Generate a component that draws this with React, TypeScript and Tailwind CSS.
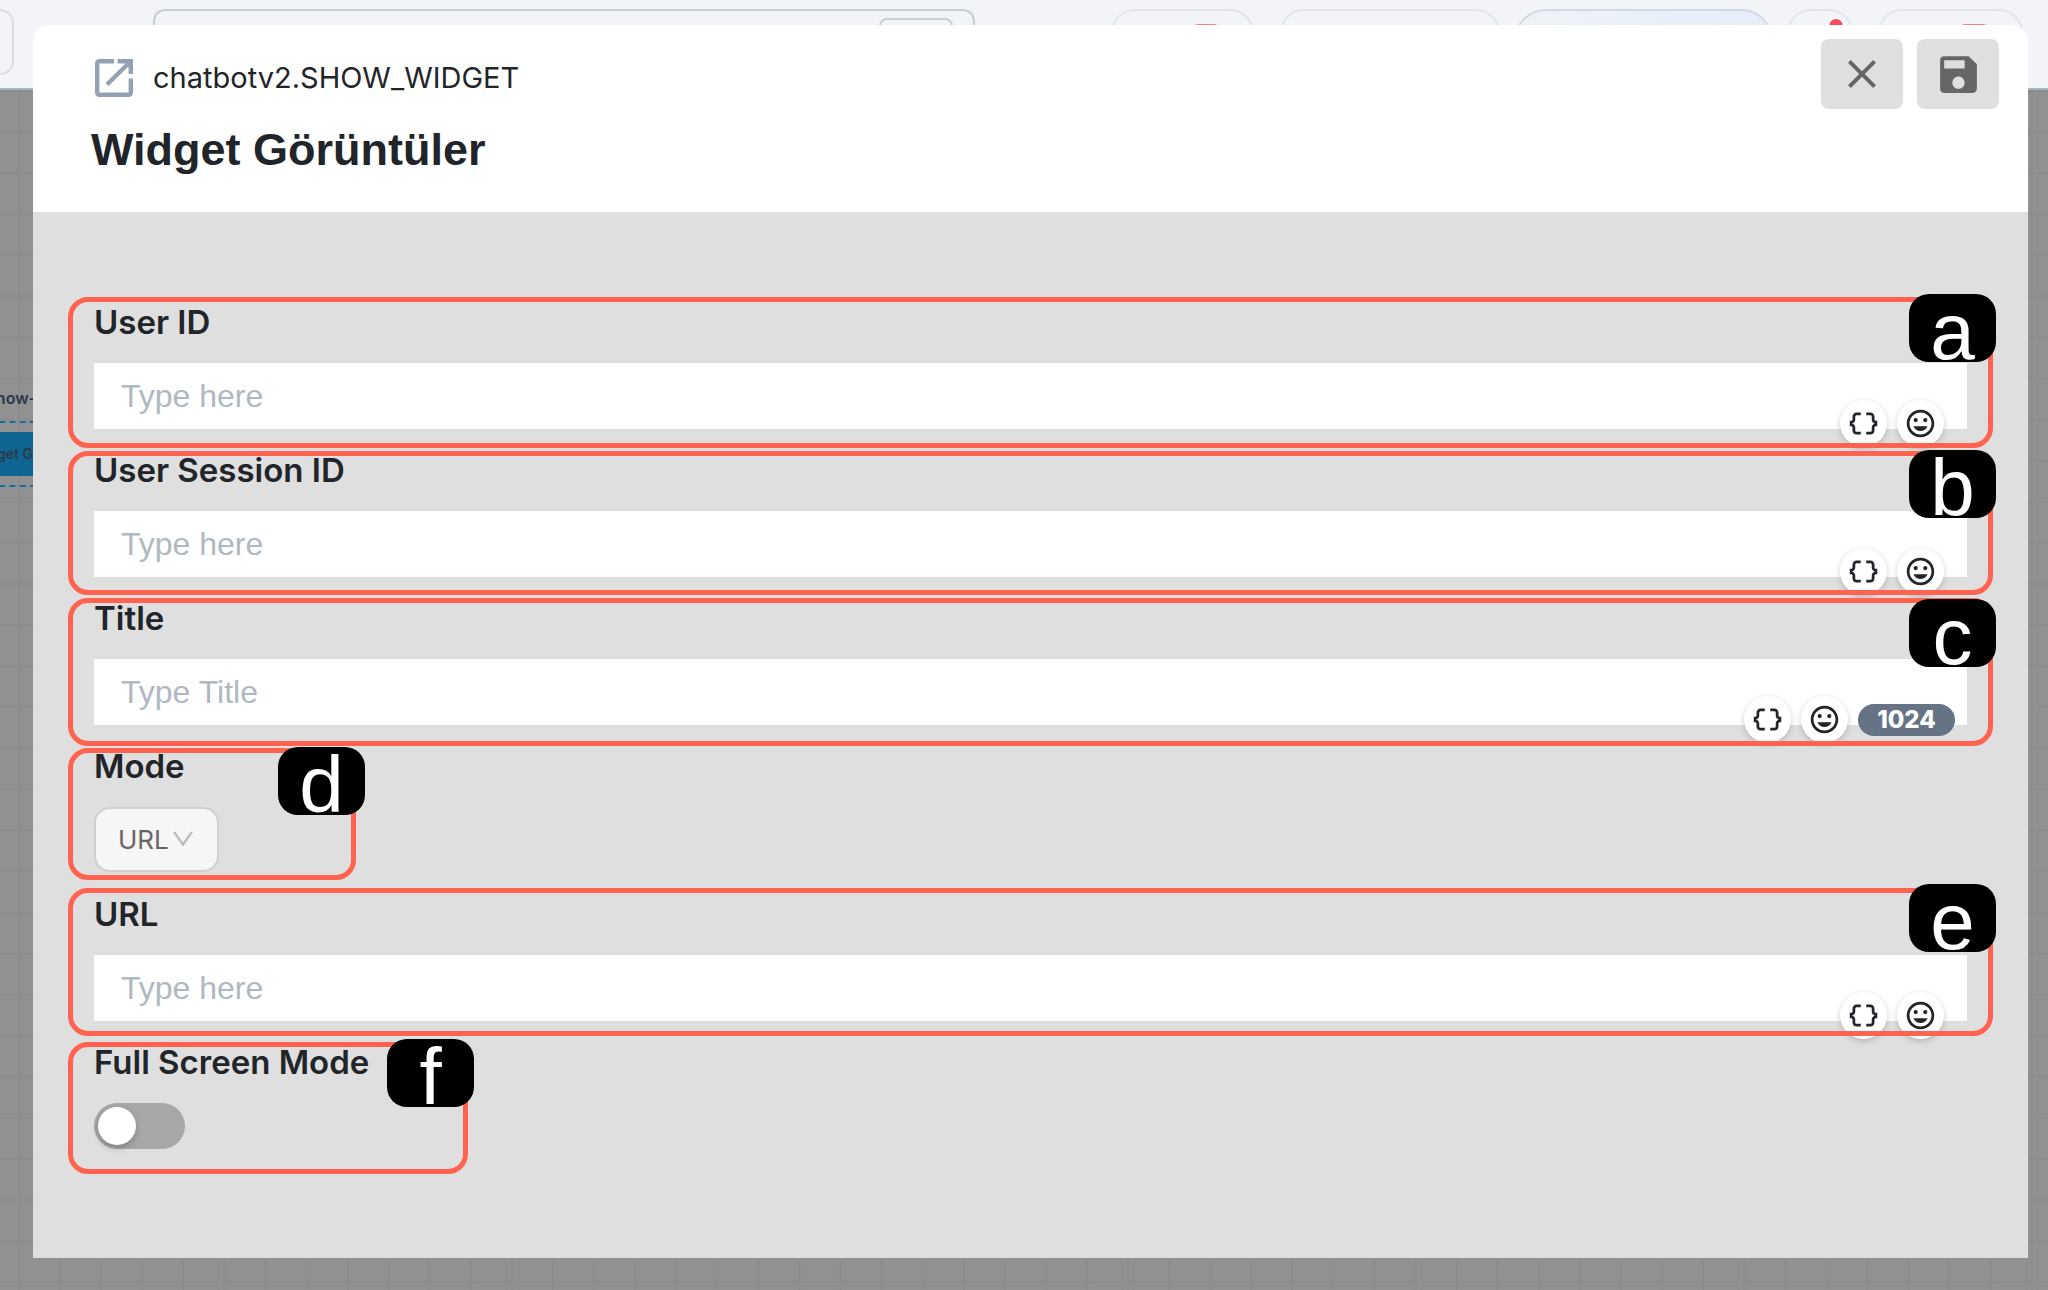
import { useState } from 'react';
import clsx from 'clsx';
import { MdClose, MdDataObject, MdInsertEmoticon, MdSave } from 'react-icons/md';

type FieldKind = 'text' | 'select' | 'switch';

interface Field {
  id: string;
  label: string;
  kind: FieldKind;
  placeholder?: string;
  limit?: number;
  marker: string;
  frameClass: string;
  badgeClass: string;
}

const fields: Field[] = [
  {
    id: 'user-id',
    label: 'User ID',
    kind: 'text',
    placeholder: 'Type here',
    marker: 'a',
    frameClass: '-inset-x-[26px] -top-[3px] h-[151px]',
    badgeClass: '-top-2 -right-2',
  },
  {
    id: 'user-session-id',
    label: 'User Session ID',
    kind: 'text',
    placeholder: 'Type here',
    marker: 'b',
    frameClass: '-inset-x-[26px] top-[3px] h-[144px]',
    badgeClass: '-top-[6px] -right-2',
  },
  {
    id: 'title',
    label: 'Title',
    kind: 'text',
    placeholder: 'Type Title',
    limit: 1024,
    marker: 'c',
    frameClass: '-inset-x-[26px] top-[2px] h-[148px]',
    badgeClass: '-top-1 -right-2',
  },
  {
    id: 'mode',
    label: 'Mode',
    kind: 'select',
    marker: 'd',
    frameClass: '-left-[26px] top-1 h-[132px] w-[288px]',
    badgeClass: '-top-[6px] -right-[14px]',
  },
  {
    id: 'url',
    label: 'URL',
    kind: 'text',
    placeholder: 'Type here',
    marker: 'e',
    frameClass: '-inset-x-[26px] -top-1 h-[148px]',
    badgeClass: '-top-[9px] -right-2',
  },
  {
    id: 'full-screen',
    label: 'Full Screen Mode',
    kind: 'switch',
    marker: 'f',
    frameClass: '-left-[26px] top-[2px] h-[132px] w-[400px]',
    badgeClass: '-top-2 -right-[11px]',
  },
];

function OpenIcon() {
  return (
    <svg width="38" height="38" viewBox="0 0 38 38" fill="none" stroke="#94a1b3" strokeWidth="4.4" aria-hidden="true">
      <path d="M19 2.2H4.2a2 2 0 0 0-2 2v29.6a2 2 0 0 0 2 2h29.6a2 2 0 0 0 2-2V19.5" />
      <path d="M22.5 2.2h13.3V15M12 25.5 34 4" />
      <path d="M27.5 2H36v8.5z" fill="#94a1b3" stroke="none" />
    </svg>
  );
}

function RoundButton({ label, children }: { label: string; children: React.ReactNode }) {
  return (
    <button
      type="button"
      aria-label={label}
      className="flex size-[47px] items-center justify-center rounded-full bg-white text-[#212529] shadow-[0_2px_6px_rgba(0,0,0,0.2)]"
    >
      {children}
    </button>
  );
}

function TextField({ field }: { field: Field }) {
  const [value, setValue] = useState('');

  return (
    <div className="relative">
      <input
        id={field.id}
        type="text"
        value={value}
        placeholder={field.placeholder}
        onChange={(e) => setValue(e.target.value)}
        className="block h-[66px] w-full bg-white px-[27px] font-['Liberation_Sans',Arial,sans-serif] text-[32px] text-[#212529] outline-none placeholder:text-[#b0b8c1]"
      />
      <div
        className={clsx(
          'absolute top-[37px] flex items-center gap-[10px]',
          field.limit ? 'right-3' : 'right-[23px]',
        )}
      >
        <RoundButton label="Insert variable">
          <MdDataObject size={33} />
        </RoundButton>
        <RoundButton label="Insert emoji">
          <MdInsertEmoticon size={33} />
        </RoundButton>
        {field.limit && (
          <span className="flex h-8 w-[97px] items-center justify-center rounded-full bg-[#667385] text-2xl font-extrabold text-white">
            {field.limit}
          </span>
        )}
      </div>
    </div>
  );
}

function SelectField({ id }: { id: string }) {
  return (
    <div className="relative w-[125px]">
      <select
        id={id}
        className="block h-[65px] w-full appearance-none rounded-2xl border-2 border-[#d0d0d0] bg-[#f6f6f6] pl-[22px] text-[26px] text-[#6b6464]"
      >
        <option>URL</option>
      </select>
      <svg
        className="pointer-events-none absolute top-[24px] right-[26px]"
        width="20"
        height="16"
        viewBox="0 0 20 16"
        fill="none"
        stroke="#bcbcbc"
        strokeWidth="2.2"
        aria-hidden="true"
      >
        <path d="M1 1l9 12.5L19 1" />
      </svg>
    </div>
  );
}

function SwitchField({ id }: { id: string }) {
  return (
    <div className="relative h-[46px] w-[91px]">
      <input
        id={id}
        type="checkbox"
        role="switch"
        className="peer block h-full w-full appearance-none rounded-full bg-[#a7a7a7] checked:bg-[#0d6efd]"
      />
      <span className="pointer-events-none absolute top-1 left-1 size-[38px] rounded-full bg-white shadow-[0_3px_6px_rgba(0,35,11,0.25)] peer-checked:left-[49px]" />
    </div>
  );
}

function FieldRow({ field }: { field: Field }) {
  return (
    <div className="relative h-[148px]">
      <label
        htmlFor={field.id}
        className="mb-[19px] block w-fit text-[33px] leading-[44px] font-semibold text-[#212529]"
      >
        {field.label}
      </label>
      {field.kind === 'text' && <TextField field={field} />}
      {field.kind === 'select' && <SelectField id={field.id} />}
      {field.kind === 'switch' && <SwitchField id={field.id} />}

      {/* callout frame with its letter */}
      <div
        className={clsx(
          'pointer-events-none absolute z-10 rounded-[20px] border-[5px] border-[#ff6350]',
          field.frameClass,
        )}
      >
        <span
          className={clsx(
            "absolute flex h-[68px] w-[87px] items-end justify-center rounded-[20px] bg-black font-['Liberation_Sans',Arial,sans-serif] text-[80px] leading-[60px] text-white",
            field.badgeClass,
          )}
        >
          {field.marker}
        </span>
      </div>
    </div>
  );
}

function TopBar() {
  return (
    <div className="flex h-[90px] items-start border-b-2 border-[#a9b7c0] bg-[#f2f4f8] pt-[9px] pr-[25px]">
      <div className="h-[66px] w-[14px] rounded-r-[20px] border-2 border-l-0 border-[#dcdddd]" />
      <div className="ml-[139px] flex h-16 flex-1 justify-end rounded-xl border-2 border-[#c5ced6] pt-[7px] pr-5">
        <div className="h-10 w-[74px] rounded-lg border-2 border-[#c5ced6]" />
      </div>
      <div className="ml-[136px] flex gap-[26px]">
        <div className="flex h-16 w-[143px] justify-end rounded-3xl border-2 border-[#e3e5ee] pt-[13px] pr-8">
          <div className="h-3 w-7 rounded-md bg-[#f5837c]" />
        </div>
        <div className="h-16 w-[220px] rounded-3xl border-2 border-[#e3e5ee]" />
      </div>
      <div className="ml-[14px] h-16 w-[259px] rounded-[32px] border-2 border-[#cfdae3] bg-linear-to-r from-[#eff3f7] to-[#e5edf9]" />
      <div className="ml-[14px] flex gap-[25px]">
        <div className="flex h-16 w-[66px] justify-end rounded-3xl border-2 border-[#e3e5ee] pt-2 pr-2">
          <div className="size-[14px] rounded-full bg-[#fb4b5e] ring-2 ring-white" />
        </div>
        <div className="flex h-16 w-[145px] justify-end rounded-3xl border-2 border-[#e3e5ee] pt-[13px] pr-8">
          <div className="h-3 w-[30px] rounded-md bg-[#f5837c]" />
        </div>
      </div>
    </div>
  );
}

function Canvas() {
  return (
    <div className="relative flex-1 overflow-hidden bg-[#919191]">
      <svg className="absolute inset-0 h-full w-full" aria-hidden="true">
        <defs>
          <pattern id="grid" x="18" y="41" width="41.08" height="41.08" patternUnits="userSpaceOnUse">
            <path d="M0 1h41.08M1 0v41.08" stroke="#8c8c8c" strokeWidth="2" />
          </pattern>
        </defs>
        <rect width="100%" height="100%" fill="url(#grid)" />
      </svg>
      {/* flow node, mostly hidden behind the dialog */}
      <div className="absolute top-[292px] right-[calc(100%-36px)] flex flex-col items-end text-[#2d3946]">
        <span className="text-base leading-8 font-semibold whitespace-nowrap">Show-</span>
        <div className="mt-[7px] w-40 border-y-[2px] border-dashed border-[#0f6da0] py-[9px]">
          <div className="h-11 bg-[#0e6592] pr-[3px] text-right text-sm leading-[44px] font-semibold">Widget G</div>
        </div>
      </div>
    </div>
  );
}

export default function App() {
  return (
    <div className="relative flex min-h-screen flex-col overflow-hidden font-[Inter,'Open_Sans',sans-serif]">
      <div className="absolute inset-0 flex flex-col">
        <TopBar />
        <Canvas />
      </div>

      <div role="dialog" aria-labelledby="dialog-title" className="relative mt-[25px] mr-5 mb-8 ml-[33px] overflow-hidden rounded-t-2xl bg-[#dfdfdf]">
        <header className="flex h-[187px] items-start justify-between bg-white pr-[29px] pl-[58px]">
          <div className="pt-[31px]">
            <div className="flex items-center gap-5 pl-1 text-[#212529]">
              <OpenIcon />
              <span className="text-[29px] leading-[44px]">chatbotv2.SHOW_WIDGET</span>
            </div>
            <h1
              id="dialog-title"
              className="mt-[22px] font-['Liberation_Sans',Arial,sans-serif] text-[45px] leading-[56px] font-bold text-[#212529]"
            >
              Widget Görüntüler
            </h1>
          </div>
          <div className="flex gap-[14px] pt-[14px] text-[#666666]">
            <button type="button" aria-label="Close" className="flex h-[70px] w-[82px] items-center justify-center rounded-lg bg-[#dfdfdf]">
              <MdClose size={48} />
            </button>
            <button type="button" aria-label="Save" className="flex h-[70px] w-[82px] items-center justify-center rounded-lg bg-[#dfdfdf]">
              <MdSave size={49} />
            </button>
          </div>
        </header>

        <form className="px-[61px] pt-[88px] pb-[70px]" onSubmit={(e) => e.preventDefault()}>
          {fields.map((field) => (
            <FieldRow key={field.id} field={field} />
          ))}
        </form>
      </div>
    </div>
  );
}
